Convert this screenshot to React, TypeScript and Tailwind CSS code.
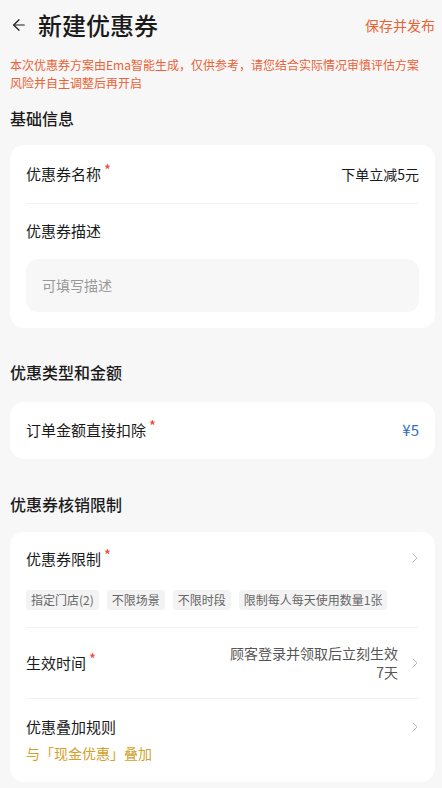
import { ArrowLeft, ChevronRight } from 'lucide-react';

const FONT = { fontFamily: '"Noto Sans CJK SC", "Noto Sans", sans-serif' };

const Star = () => <span className="ml-[3px] -mt-[10px] text-[15px] leading-none text-[#f5402c]">*</span>;

const Chevron = () => <ChevronRight className="h-[16px] w-[16px] text-[#bdbdbd]" strokeWidth={1.5} />;

const TAGS = ['指定门店(2)', '不限场景', '不限时段', '限制每人每天使用数量1张'];

export default function App() {
  return (
    <div style={FONT} className="min-h-[788px] w-[442px] bg-[#f7f7f7] text-[#1a1a1a]">
      {/* 顶部栏 */}
      <div className="flex h-[50px] items-center pl-[10px] pr-[7px]">
        <ArrowLeft className="h-[18px] w-[18px] text-[#1a1a1a]" strokeWidth={1.6} />
        <h1 className="ml-[10px] text-[24px] font-medium leading-none">新建优惠券</h1>
        <button className="ml-auto text-[14px] text-[#ea6236]">保存并发布</button>
      </div>

      <p className="mt-[6px] px-[10px] text-[12px] leading-[18px] text-[#ea6236]">
        本次优惠券方案由Ema智能生成，仅供参考，请您结合实际情况审慎评估方案
        <br />
        风险并自主调整后再开启
      </p>

      <h2 className="mt-[14px] px-[10px] text-[16px] font-medium leading-[24px]">基础信息</h2>
      <div className="ml-[10px] mr-[7px] mt-[15px] rounded-[14px] bg-white px-[16px] pb-[16px]">
        <div className="flex h-[59px] items-center border-b border-[#f2f2f2]">
          <span className="text-[15px]">优惠券名称</span>
          <Star />
          <span className="ml-auto text-[14px]">下单立减5元</span>
        </div>
        <div className="flex h-[55px] items-center text-[15px]">优惠券描述</div>
        <div className="flex h-[53px] items-center rounded-[12px] bg-[#f7f7f7] px-[16px] text-[14px] text-[#999]">
          可填写描述
        </div>
      </div>

      <h2 className="mt-[32px] px-[10px] text-[16px] font-medium leading-[24px]">优惠类型和金额</h2>
      <div className="ml-[10px] mr-[7px] mt-[18px] flex h-[57px] items-center rounded-[14px] bg-white px-[16px]">
        <span className="text-[15px]">订单金额直接扣除</span>
        <Star />
        <span className="ml-auto text-[15px] text-[#2f6dbf]">¥5</span>
      </div>

      <h2 className="mt-[33px] px-[10px] text-[16px] font-medium leading-[24px]">优惠券核销限制</h2>
      <div className="ml-[10px] mr-[7px] mt-[16px] rounded-[14px] bg-white px-[16px]">
        <div className="border-b border-[#f2f2f2] pb-[17px]">
          <div className="flex h-[55px] items-center">
            <span className="text-[15px]">优惠券限制</span>
            <Star />
            <span className="ml-auto -mr-[4px] -mt-[4px]"><Chevron /></span>
          </div>
          <div className="mt-[3px] flex gap-[8px]">
            {TAGS.map((t) => (
              <span key={t} className="rounded-[4px] bg-[#f3f3f3] px-[5px] text-[12px] leading-[20px] text-[#666]">
                {t}
              </span>
            ))}
          </div>
        </div>
        <div className="flex h-[71px] items-center border-b border-[#f2f2f2]">
          <span className="text-[15px]">生效时间</span>
          <Star />
          <span className="ml-auto text-right text-[14px] leading-[19px] text-[#555]">
            顾客登录并领取后立刻生效
            <br />
            7天
          </span>
          <span className="-mr-[4px] ml-[9px]"><Chevron /></span>
        </div>
        <div className="pb-[19px] pt-[16px]">
          <div className="flex items-center">
            <span className="text-[15px] leading-[24px]">优惠叠加规则</span>
            <span className="ml-auto -mr-[4px]"><Chevron /></span>
          </div>
          <p className="mt-[4px] text-[14px] leading-[20px] text-[#d3a22a]">与「现金优惠」叠加</p>
        </div>
      </div>
    </div>
  );
}
